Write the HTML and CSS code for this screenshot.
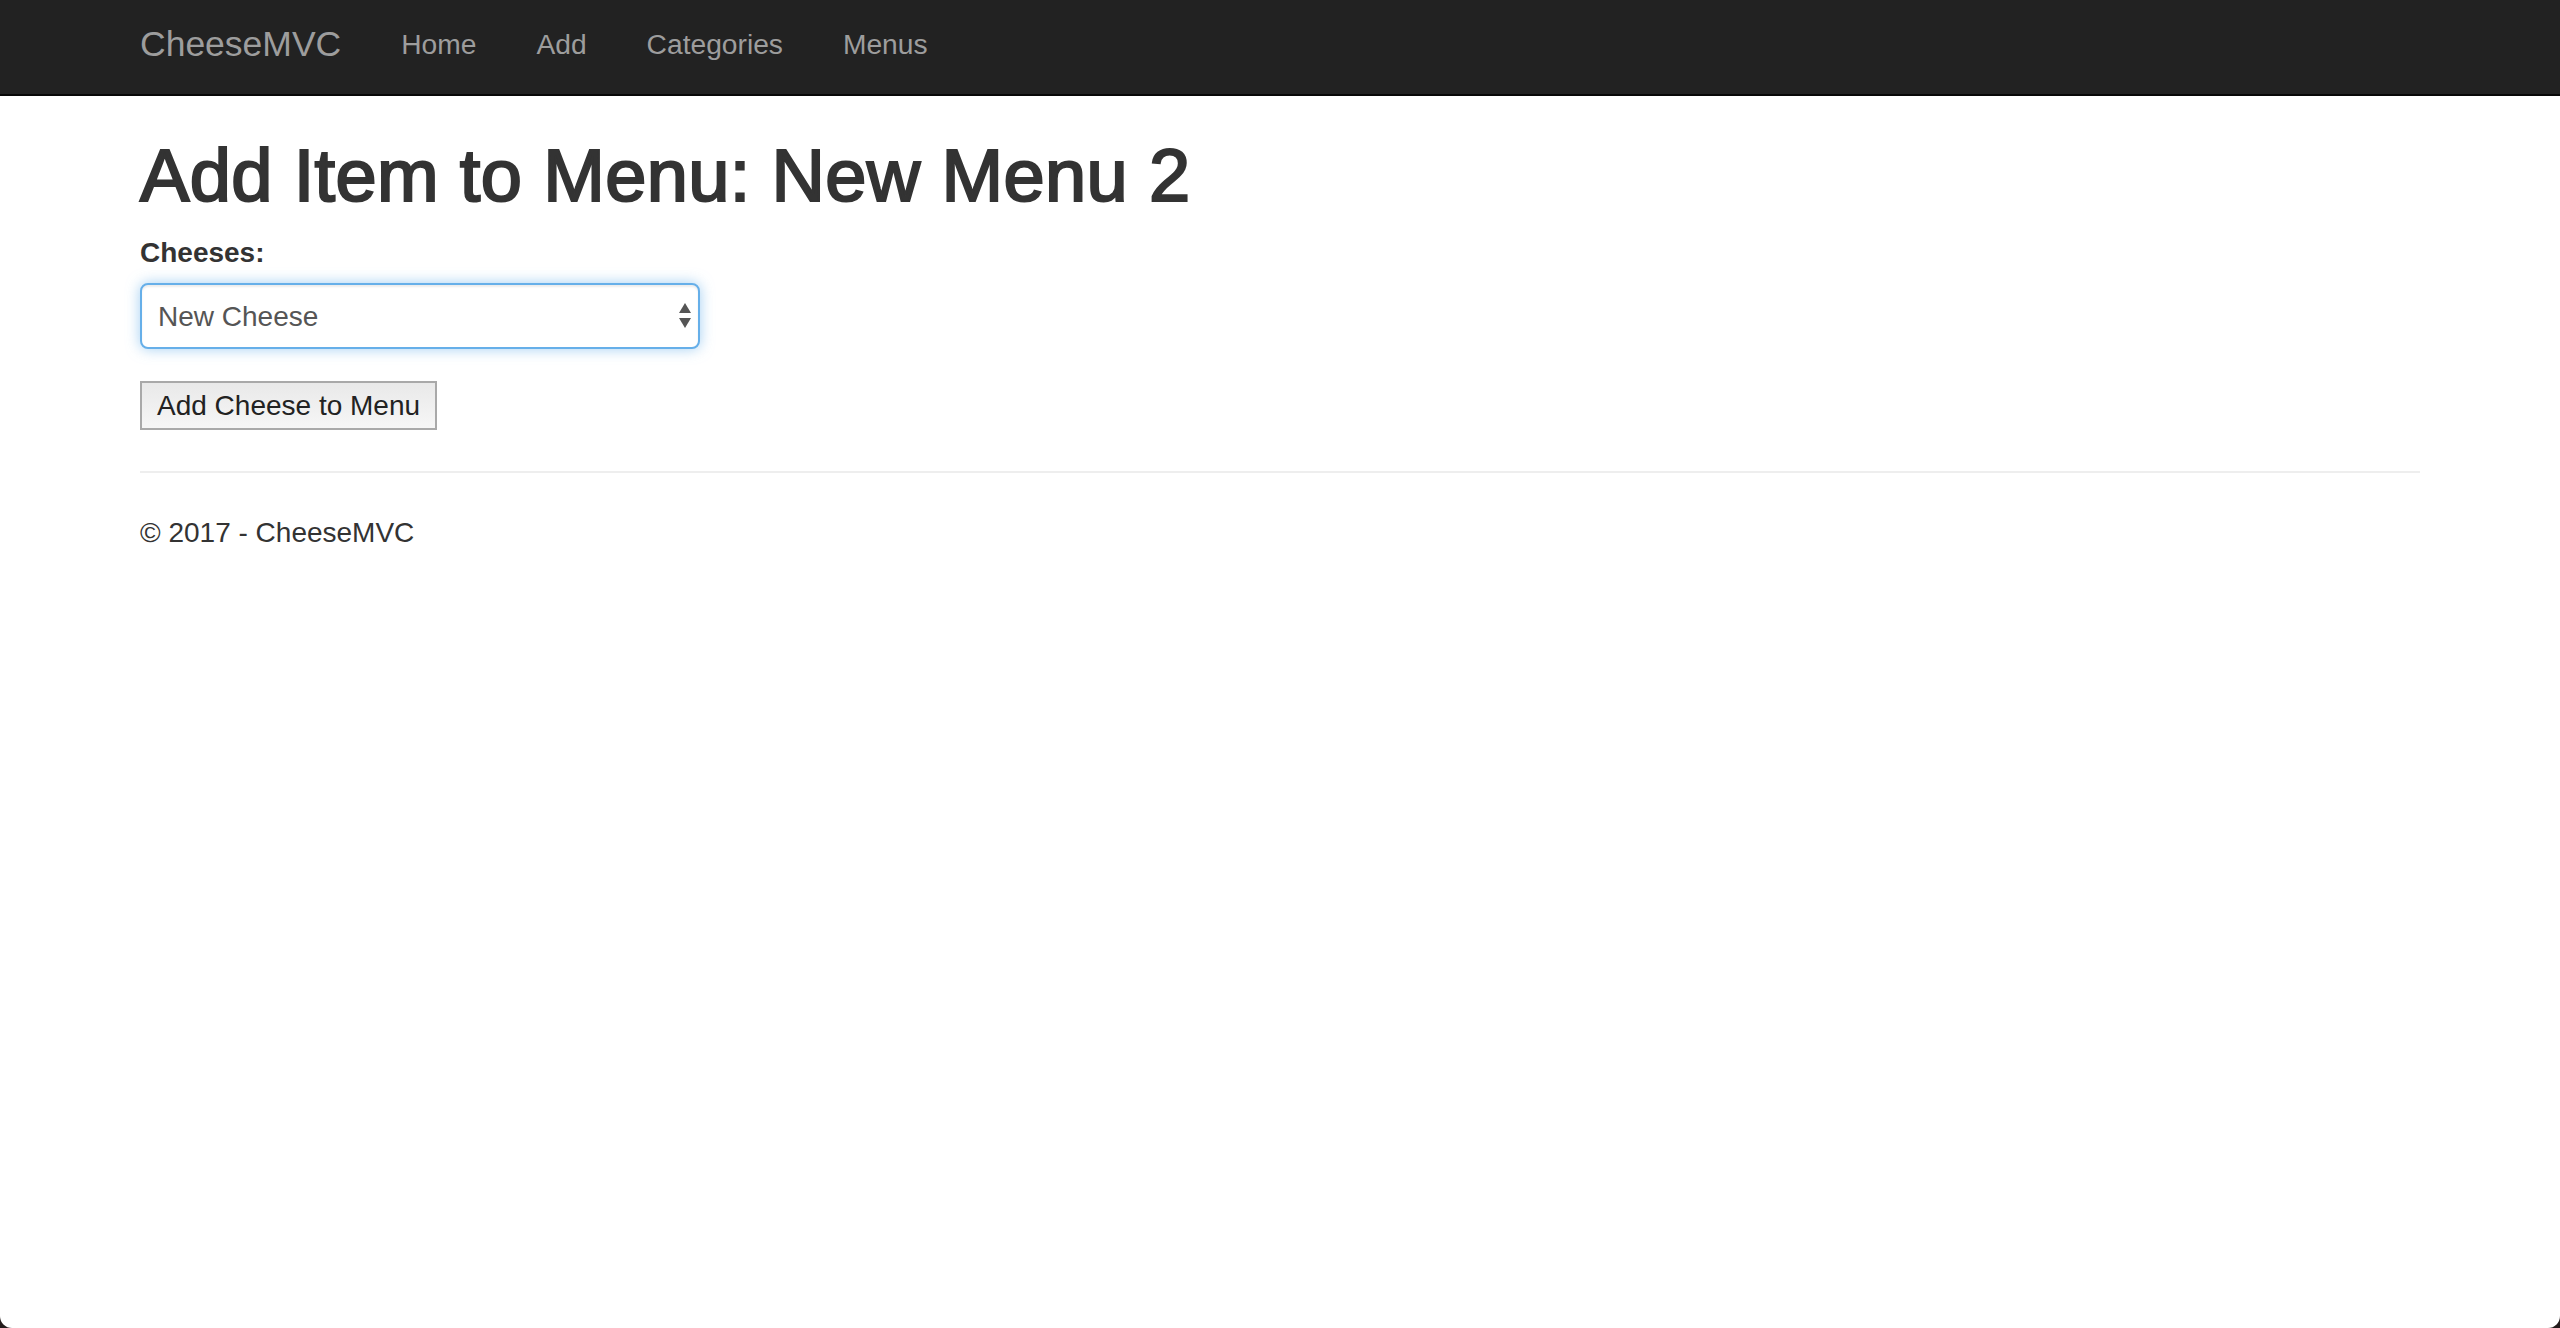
FILE: index.html
```html
<!DOCTYPE html>
<html lang="en">
<head>
<meta charset="utf-8">
<title>Add Item to Menu - CheeseMVC</title>
<link rel="stylesheet" href="styles.css">
</head>
<body>
<div class="page">
  <nav class="navbar">
    <div class="container navbar-inner">
      <a class="brand" href="#">CheeseMVC</a>
      <ul class="nav">
        <li><a href="#">Home</a></li>
        <li><a href="#">Add</a></li>
        <li><a href="#">Categories</a></li>
        <li><a href="#">Menus</a></li>
      </ul>
    </div>
  </nav>
  <main class="container body-content">
    <h1 class="title">Add Item to Menu: New Menu 2</h1>
    <form class="form">
      <div class="form-group">
        <label class="label" for="cheese">Cheeses:</label>
        <div class="select-wrap">
          <select id="cheese" class="select">
            <option>New Cheese</option>
          </select>
          <svg class="select-arrows" width="14" height="28" viewBox="0 0 14 28" aria-hidden="true">
            <polygon points="7,1 13,11 1,11" fill="#555"/>
            <polygon points="1,16 13,16 7,26" fill="#555"/>
          </svg>
        </div>
      </div>
      <button type="button" class="button">Add Cheese to Menu</button>
    </form>
    <hr class="rule">
    <footer class="footer">
      <p>&copy; 2017 - CheeseMVC</p>
    </footer>
  </main>
</div>
</body>
</html>
```

FILE: styles.css
```css
* {
  box-sizing: border-box;
}

html {
  background: #241c1c;
}

body {
  margin: 0;
  font-family: "Liberation Sans", Arial, Helvetica, sans-serif;
  font-size: 28px;
  line-height: 40px;
  color: #333;
}

.page {
  min-height: 1328px;
  background: #fff;
  border-radius: 0 0 12px 12px;
  overflow: hidden;
}

.container {
  width: 2280px;
  margin: 0 auto;
}

.navbar {
  background: #222;
  border-bottom: 2px solid #080808;
  height: 96px;
}

.navbar-inner {
  display: flex;
  align-items: center;
  height: 88px;
}

.brand {
  font-size: 35.5px;
  line-height: 40px;
  color: #9d9d9d;
  text-decoration: none;
  padding-right: 30px;
}

.nav {
  display: flex;
  list-style: none;
  margin: 0;
  padding: 0;
}

.nav a {
  display: block;
  padding: 0 30px;
  font-size: 28.2px;
  line-height: 40px;
  color: #9d9d9d;
  text-decoration: none;
}

.body-content {
  padding-top: 39px;
}

.title {
  font-size: 74px;
  font-weight: 500;
  line-height: 1.1;
  letter-spacing: 0.35px;
  margin: 0 0 17px;
  color: #333;
  -webkit-text-stroke: 2.2px #333;
}

.form-group {
  margin-bottom: 32px;
}

.label {
  display: block;
  font-weight: bold;
  margin-bottom: 10px;
}

.select-wrap {
  position: relative;
  width: 560px;
}

.select {
  display: block;
  width: 560px;
  height: 66px;
  padding: 0 40px 0 16px;
  font-family: inherit;
  font-size: 28px;
  color: #555;
  background: #fff;
  border: 2px solid #66afe9;
  border-radius: 8px;
  outline: 0;
  box-shadow: inset 0 2px 2px rgba(0, 0, 0, 0.075), 0 0 14px rgba(102, 175, 233, 0.6);
  -webkit-appearance: none;
  appearance: none;
}

.select-arrows {
  position: absolute;
  right: 8px;
  top: 19px;
}

.button {
  display: block;
  height: 49px;
  padding: 0 15px;
  font-family: inherit;
  font-size: 28px;
  line-height: 30px;
  color: #222;
  background: linear-gradient(#e9e9e9, #f6f6f6);
  border: 2px solid #a9a9a9;
  border-radius: 0;
}

.rule {
  margin: 41px 0 40px;
  border: 0;
  border-top: 2px solid #eee;
  height: 0;
}

.footer p {
  margin: 0;
  font-size: 28px;
}
```
